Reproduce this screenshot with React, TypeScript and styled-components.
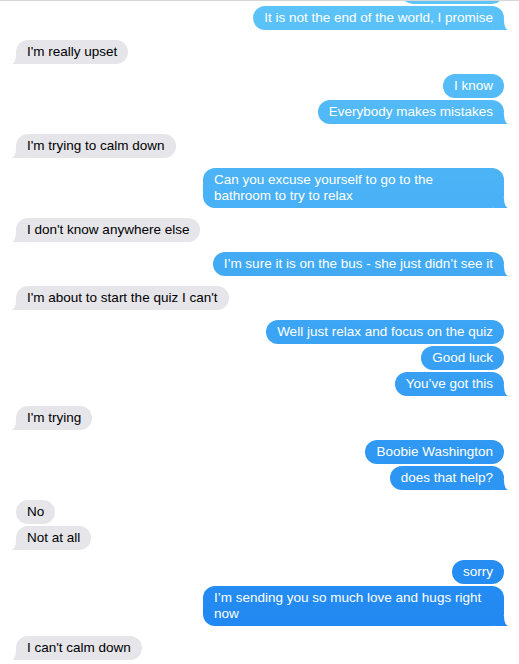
import React from "react";
import styled, { createGlobalStyle, css } from "styled-components";

const Global = createGlobalStyle`
  html, body {
    margin: 0;
    padding: 0;
    background: #ffffff;
  }
  body {
    font-family: "Liberation Sans", Arial, Helvetica, sans-serif;
    -webkit-font-smoothing: antialiased;
  }
`;

const BLUE_FILL =
  "linear-gradient(to bottom, #5dc4f9 0px, #44acf5 250px, #2f98f3 450px, #1e85f1 664px) fixed";
const GRAY_FILL = "#e5e5ea";

type Side = "me" | "them";

const Screen = styled.div`
  height: 664px;
  box-sizing: border-box;
  border-top: 1px solid #d6d6d6;
  overflow: hidden;
  background: #ffffff;
`;

const Thread = styled.div`
  display: flex;
  flex-direction: column;
  gap: 10px;
  padding: 0 15px 0 16px;
  margin-top: -21px;
`;

const Group = styled.div<{ $side: Side }>`
  display: flex;
  flex-direction: column;
  gap: 2px;
  align-items: ${(p) => (p.$side === "me" ? "flex-end" : "flex-start")};
`;

const tailMe = css`
  &::before {
    content: "";
    position: absolute;
    bottom: 0;
    right: -4px;
    width: 14px;
    height: 10px;
    background: ${BLUE_FILL};
  }
  &::after {
    content: "";
    position: absolute;
    bottom: 0;
    right: -10px;
    width: 10px;
    height: 10px;
    background: #ffffff;
    border-bottom-left-radius: 4px 10px;
  }
`;

const tailThem = css`
  &::before {
    content: "";
    position: absolute;
    bottom: 0;
    left: -4px;
    width: 14px;
    height: 10px;
    background: ${GRAY_FILL};
  }
  &::after {
    content: "";
    position: absolute;
    bottom: 0;
    left: -10px;
    width: 10px;
    height: 10px;
    background: #ffffff;
    border-bottom-right-radius: 4px 10px;
  }
`;

const Bubble = styled.div<{ $side: Side; $tail: boolean }>`
  position: relative;
  box-sizing: border-box;
  max-width: 301px;
  padding: 4px 11px;
  border-radius: 12px;
  font-size: 13.5px;
  line-height: 16px;
  color: ${(p) => (p.$side === "me" ? "#ffffff" : "#000000")};
  background: ${(p) => (p.$side === "me" ? BLUE_FILL : GRAY_FILL)};
  ${(p) => (p.$tail ? (p.$side === "me" ? tailMe : tailThem) : "")}
`;

const Text = styled.span`
  position: relative;
  z-index: 1;
`;

const conversation: { side: Side; messages: string[] }[] = [
  { side: "me", messages: ["It will be okay", "It is not the end of the world, I promise"] },
  { side: "them", messages: ["I'm really upset"] },
  { side: "me", messages: ["I know", "Everybody makes mistakes"] },
  { side: "them", messages: ["I'm trying to calm down"] },
  { side: "me", messages: ["Can you excuse yourself to go to the bathroom to try to relax"] },
  { side: "them", messages: ["I don't know anywhere else"] },
  { side: "me", messages: ["I’m sure it is on the bus - she just didn’t see it"] },
  { side: "them", messages: ["I'm about to start the quiz I can't"] },
  { side: "me", messages: ["Well just relax and focus on the quiz", "Good luck", "You’ve got this"] },
  { side: "them", messages: ["I'm trying"] },
  { side: "me", messages: ["Boobie Washington", "does that help?"] },
  { side: "them", messages: ["No", "Not at all"] },
  { side: "me", messages: ["sorry", "I’m sending you so much love and hugs right now"] },
  { side: "them", messages: ["I can't calm down"] },
];

export default function App() {
  return (
    <>
      <Global />
      <Screen>
        <Thread>
          {conversation.map((g, gi) => (
            <Group key={gi} $side={g.side}>
              {g.messages.map((m, mi) => (
                <Bubble key={mi} $side={g.side} $tail={mi === g.messages.length - 1}>
                  <Text>{m}</Text>
                </Bubble>
              ))}
            </Group>
          ))}
        </Thread>
      </Screen>
    </>
  );
}
